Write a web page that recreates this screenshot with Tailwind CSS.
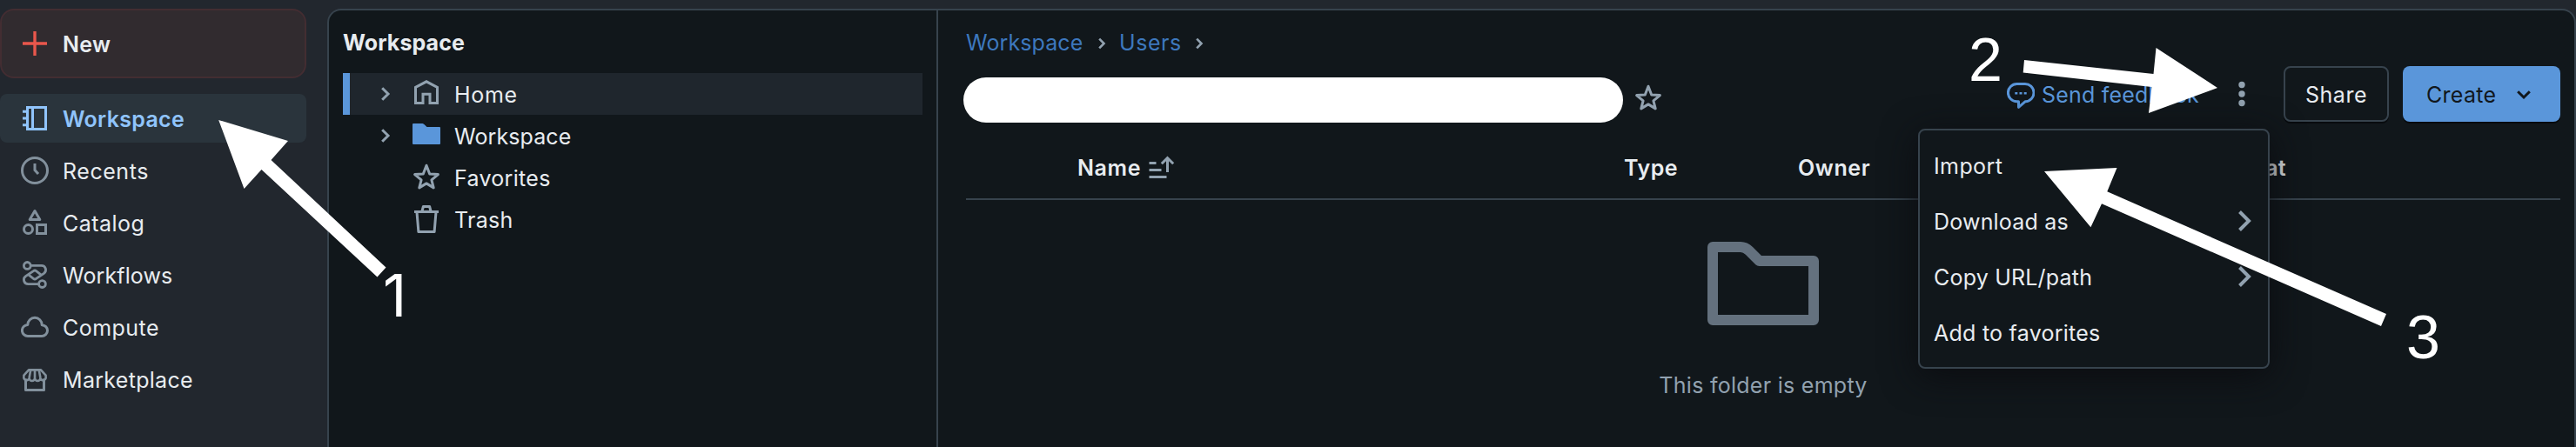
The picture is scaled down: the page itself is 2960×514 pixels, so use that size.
<!DOCTYPE html>
<html lang="en">
<head>
<meta charset="utf-8">
<title>Workspace</title>
<script src="https://cdn.jsdelivr.net/npm/@tailwindcss/browser@4"></script>
</head>
<body class="relative flex h-[514px] w-[2960px] overflow-hidden bg-[#22272e] font-['Inter',sans-serif] text-[25px] leading-10 tracking-[0.3px] text-[#e8ecf0] whitespace-nowrap">

<!-- Sidebar -->
<aside class="w-[376px] shrink-0 pt-2.5 pr-6">
  <div class="flex h-20 items-center gap-4 rounded-2xl border-2 border-[#432d32] bg-[#312b2f] pl-[22px] font-semibold">
    <svg class="size-8" viewBox="0 0 32 32" fill="none" stroke="#e9574c" stroke-width="3.4"><path d="M16 2v28M2 16h28"/></svg>
    <span class="pt-0.5">New</span>
  </div>
  <nav class="mt-[18px] flex flex-col gap-1 text-[#e8ecf0]">
    <div class="flex h-14 items-center gap-4 rounded-lg bg-[#2a343c] pl-6 font-semibold text-[#90c4fb]">
      <svg class="size-8" viewBox="0 0 32 32" fill="none" stroke="currentColor" stroke-width="3"><rect x="7.5" y="3.5" width="21" height="25"/><path d="M13.5 3v26M2 8.3h5M2 16h5M2 23.7h5"/></svg>
      <span class="pt-0.5">Workspace</span>
    </div>
    <div class="flex h-14 items-center gap-4 pl-6">
      <svg class="size-8" viewBox="0 0 32 32" fill="none" stroke="#82909c" stroke-width="3"><circle cx="16" cy="16" r="14.5"/><path d="M16 8v7.6l4 4.4"/></svg>
      <span class="pt-0.5 tracking-[0.55px]">Recents</span>
    </div>
    <div class="flex h-14 items-center gap-4 pl-6">
      <svg class="size-8" viewBox="0 0 32 32" fill="none" stroke="#82909c" stroke-width="3"><path d="M16 2.6 21.8 12.5H10.2z" stroke-linejoin="round"/><circle cx="8.5" cy="23.5" r="5"/><rect x="18.5" y="18.5" width="10" height="10"/></svg>
      <span class="pt-0.5 tracking-[0.45px]">Catalog</span>
    </div>
    <div class="flex h-14 items-center gap-4 pl-6">
      <svg class="size-8" viewBox="0 0 32 32" fill="none" stroke="#82909c" stroke-width="2.8"><circle cx="7.3" cy="5.4" r="3.9"/><circle cx="24.5" cy="26.6" r="3.9"/><path d="M11.5 5.4H23.6a4.9 4.9 0 0 1 2.9 8.9L17.6 20.4a2.6 2.6 0 0 1-3.2 0L9 16.2M20.3 26.6H8.4a4.9 4.9 0 0 1-2.9-8.9L14.4 11.6a2.6 2.6 0 0 1 3.2 0L23 15.8"/></svg>
      <span class="pt-0.5 tracking-[0.1px]">Workflows</span>
    </div>
    <div class="flex h-14 items-center gap-4 pl-6">
      <svg class="size-8" viewBox="0 0 32 32" fill="none" stroke="#82909c" stroke-width="3" stroke-linejoin="round"><path d="M8 26.5a6.5 6.5 0 0 1-.2-13a8.2 8.2 0 0 1 16.4 0v.2a6.4 6.4 0 0 1-.2 12.8z"/></svg>
      <span class="pt-0.5 tracking-[0.47px]">Compute</span>
    </div>
    <div class="flex h-14 items-center gap-4 pl-6">
      <svg class="size-8" viewBox="0 0 32 32" fill="none" stroke="#82909c" stroke-width="2.6" stroke-linejoin="round"><path d="M9 5.4h14l5.6 6.2v1.6a3 3 0 0 1-6.2 1.6 3.2 3.2 0 0 1-6.4 0 3.2 3.2 0 0 1-6.4 0A3 3 0 0 1 3.4 13.2v-1.6zM11.2 5.5l-1.6 9M16 5.5v9M20.8 5.5l1.6 9"/><path d="M5.5 15.5v13h21v-13" stroke-width="3"/></svg>
      <span class="pt-0.5">Marketplace</span>
    </div>
  </nav>
</aside>

<!-- Panel -->
<div class="mt-2.5 flex grow rounded-t-2xl border-2 border-b-0 border-[#37434d] bg-[#11171b]">

  <!-- Tree -->
  <section class="w-[700px] shrink-0 border-r-2 border-[#37434d] px-4 pt-[17px]">
    <h1 class="pb-[15px] font-bold tracking-[0.08px]"><span>Workspace</span></h1>
    <div class="flex h-12 items-center border-l-8 border-[#5a96da] bg-[#1f262d] pl-[33px]">
      <svg class="h-8 w-4" viewBox="0 0 16 32" fill="none" stroke="#92a2b0" stroke-width="3"><path d="M4.2 9.2 11 16l-6.8 6.8"/></svg>
      <svg class="ml-[23px] size-8" viewBox="0 0 32 32" fill="none" stroke="#92a2b0" stroke-width="3"><path d="M3.5 8.3 16 1.8l12.5 6.5v18.2H20V16.2h-8v10.3H3.5z"/></svg>
      <span class="ml-4 pt-0.5 tracking-[0.7px]">Home</span>
    </div>
    <div class="flex h-12 items-center pl-[41px]">
      <svg class="h-8 w-4" viewBox="0 0 16 32" fill="none" stroke="#92a2b0" stroke-width="3"><path d="M4.2 9.2 11 16l-6.8 6.8"/></svg>
      <svg class="ml-[23px] size-8" viewBox="0 0 32 32" fill="#5a96da"><path d="M1 2h9.5c1.4 0 2.2.4 3.2 1.3L16.5 6H31a1 1 0 0 1 1 1v18a1 1 0 0 1-1 1H1a1 1 0 0 1-1-1V3a1 1 0 0 1 1-1z"/></svg>
      <span class="ml-4 pt-0.5 tracking-[0.1px]">Workspace</span>
    </div>
    <div class="flex h-12 items-center pl-20">
      <svg class="size-8" viewBox="0 0 32 32" fill="none" stroke="#92a2b0" stroke-width="3" stroke-linejoin="round"><path d="M16 2.2l3.7 9.8 9.7.6-7.5 6.3 2.3 9L16 22.900l-8.2 5 2.3-9L2.6 12.6l9.700-.6z"/></svg>
      <span class="ml-4 pt-0.5">Favorites</span>
    </div>
    <div class="flex h-12 items-center pl-20">
      <svg class="size-8" viewBox="0 0 32 32" fill="none" stroke="#92a2b0" stroke-width="3"><path d="M2 7.5h28M10.8 7.5l1.6-6h7.2l1.6 6M5 8l1.9 22.5h18.2L27 8" stroke-linejoin="round"/></svg>
      <span class="ml-4 pt-0.5">Trash</span>
    </div>
  </section>

  <!-- Folder contents -->
  <main class="flex grow flex-col pr-4 pl-8">
    <header class="flex h-36 justify-between">
      <div class="pt-[18px]">
        <div class="flex h-10 items-center text-[#3d78be]">
          <span class="w-[136px] pb-0.5 tracking-[0.1px]">Workspace</span>
          <svg class="ml-[15px] h-8 w-3" viewBox="0 0 12 32" fill="none" stroke="#92a2b0" stroke-width="2.6"><path d="M2.2 10.7 7.5 16l-5.3 5.3"/></svg>
          <span class="ml-[13px] w-[71px] pb-0.5 tracking-[0.55px]">Users</span>
          <svg class="ml-4 h-8 w-3" viewBox="0 0 12 32" fill="none" stroke="#92a2b0" stroke-width="2.6"><path d="M2.2 10.7 7.5 16l-5.3 5.3"/></svg>
        </div>
        <div class="mt-[19px] -ml-[3px] flex gap-[13px]">
          <div class="h-[52px] w-[758px] rounded-full bg-white"></div>
          <svg class="mt-2 size-8" viewBox="0 0 32 32" fill="none" stroke="#92a2b0" stroke-width="3" stroke-linejoin="round"><path d="M16 2.2l3.7 9.8 9.7.6-7.5 6.3 2.3 9L16 22.9l-8.2 5 2.3-9L2.6 12.6l9.7-.6z"/></svg>
        </div>
      </div>
      <div class="flex h-32 items-end">
        <div class="flex h-16 items-center text-[#5a96da]">
          <svg class="h-9 w-8 translate-y-0.5" viewBox="0 0 32 36" fill="none" stroke="currentColor" stroke-width="3" stroke-linejoin="round"><path d="M11.5 4.5h9a10 10 0 0 1 .8 20.2L13.5 31.3v-6.6h-2a10 10 0 0 1 0-20.2z"/><path d="M9.3 15.3h3M14.5 15.3h3M19.7 15.3h3" stroke-width="2.6"/></svg>
          <span class="ml-2 w-[182px] pt-0.5 tracking-[0.2px]">Send feedback</span>
        </div>
        <div class="ml-8 flex h-16 w-8 items-center justify-center">
          <svg class="size-8" viewBox="0 0 32 32" fill="#92a2b0"><circle cx="16" cy="5.5" r="3.7"/><circle cx="16" cy="16" r="3.7"/><circle cx="16" cy="26.5" r="3.7"/></svg>
        </div>
        <div class="ml-8 flex h-16 w-[121px] items-center justify-center rounded-lg border-2 border-[#37434d] shadow-[0_2px_0_#080b0e]"><span class="pt-0.5 tracking-[0.54px]">Share</span></div>
        <div class="ml-4 flex h-16 w-[181px] items-center rounded-lg bg-[#5a96da] pl-[27px] text-[#11171c] shadow-[0_2px_0_#080b0e]">
          <span class="w-[96px] pt-0.5">Create</span>
          <svg class="size-8" viewBox="0 0 32 32" fill="none" stroke="currentColor" stroke-width="3"><path d="M9.2 13.2 16 20l6.8-6.8"/></svg>
        </div>
      </div>
    </header>

    <div class="flex h-[74px] items-center border-b-2 border-[#37434d] pl-32 font-semibold">
      <div class="flex w-[628px] items-center">
        <span class="pt-0.5 tracking-[0.6px]">Name</span>
        <svg class="ml-2 size-8" viewBox="0 0 32 32" fill="none" stroke="#92a2b0" stroke-width="3"><path d="M1.5 11.5h8M1.5 19.5h14M1.5 27.5h20M22.5 22V6M15.8 12.3l6.7-6.7 6.7 6.7"/></svg>
      </div>
      <span class="w-[200px] pt-0.5 tracking-[0.5px]">Type</span>
      <span class="w-[200px] pt-0.5 tracking-[0.6px]">Owner</span>
      <span class="w-[361px] pt-0.5 text-right">Created at</span>
    </div>

    <div class="flex flex-col items-center pt-8">
      <svg class="size-32" viewBox="0 0 128 128" fill="none" stroke="#64717e" stroke-width="12" stroke-linejoin="round"><path d="M6 22H38c4 0 7 1.5 10 4.5L59.5 38H122v68H6z"/></svg>
      <p class="mt-8 pt-[1px] tracking-[0.27px] text-[#92a2b0]">This folder is empty</p>
    </div>
  </main>
</div>

<!-- Kebab menu -->
<div class="absolute top-[148px] left-[2204px] h-[276px] w-[404px] rounded-lg border-2 border-[#37434d] bg-[#11171b] py-2 pr-[18px] pl-4 shadow-[0_8px_40px_#0b0c10]">
  <div class="flex h-16 items-center"><span class="pt-0.5 tracking-[0.4px]">Import</span></div>
  <div class="flex h-16 items-center justify-between">
    <span class="pt-0.5 tracking-[0.2px]">Download as</span>
    <svg class="h-8 w-5" viewBox="0 0 20 32" fill="none" stroke="#92a2b0" stroke-width="4"><path d="M5.5 5.500 16 16 5.5 26.5"/></svg>
  </div>
  <div class="flex h-16 items-center justify-between">
    <span class="pt-0.5 tracking-[0.2px]">Copy URL/path</span>
    <svg class="h-8 w-5" viewBox="0 0 20 32" fill="none" stroke="#92a2b0" stroke-width="4"><path d="M5.5 5.5 16 16 5.5 26.5"/></svg>
  </div>
  <div class="flex h-16 items-center"><span class="pt-0.5 tracking-[0.25px]">Add to favorites</span></div>
</div>

<!-- Step arrows and numbers -->
<svg class="absolute inset-0 h-[514px] w-[2960px] tracking-normal" viewBox="0 0 2960 514" fill="#fff">
  <path d="M251.2 138 331 162 311.5 184 443.5 307.5 433.5 318.5 300.5 195 280.5 217z"/>
  <path d="M2326 69 2474.5 85 2477.5 55 2548 101 2469 130 2472.5 100 2324.7 83.5z"/>
  <path d="M2349 197 2432.5 193 2421.3 220.3 2742 361 2736 375 2415 234.3 2402.4 261.3z"/>
  <text x="440" y="364" font-family="Inter" font-size="67">1</text>
  <text x="2262" y="93" font-family="Liberation Sans" font-size="70">2</text>
  <text x="2765" y="411.5" font-family="Liberation Sans" font-size="70">3</text>
</svg>
</body>
</html>
